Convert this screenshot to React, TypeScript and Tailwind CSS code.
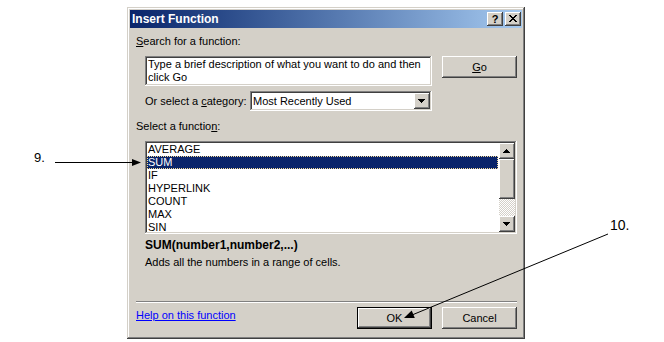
const raised =
  "shadow-[inset_-1px_-1px_#404040,inset_1px_1px_#fff,inset_-2px_-2px_#808080,inset_2px_2px_#d4d0c8]";
const sunken =
  "shadow-[inset_-1px_-1px_#fff,inset_1px_1px_#808080,inset_-2px_-2px_#d4d0c8,inset_2px_2px_#404040]";

const functions = ["AVERAGE", "SUM", "IF", "HYPERLINK", "COUNT", "MAX", "SIN"];

function ArrowUp() {
  return (
    <svg width="16" height="16" shapeRendering="crispEdges">
      <path d="M7 6h1v1H7zM6 7h3v1H6zM5 8h5v1H5zM4 9h7v1H4z" fill="#000" />
    </svg>
  );
}

function ArrowDown() {
  return (
    <svg width="16" height="16" shapeRendering="crispEdges">
      <path d="M4 6h7v1H4zM5 7h5v1H5zM6 8h3v1H6zM7 9h1v1H7z" fill="#000" />
    </svg>
  );
}

function TitleBar() {
  return (
    <div className="flex h-[18px] items-center justify-between bg-linear-to-r from-[#0a246a] to-[#a6caf0] pl-[2px] pr-[1px]">
      <span className="text-[12px] font-bold leading-[18px] text-white">Insert Function</span>
      <div className="flex gap-[2px]">
        <button
          type="button"
          className={`flex h-[14px] w-[16px] items-center justify-center bg-[#d4d0c8] text-[11px] font-bold leading-[14px] ${raised}`}
        >
          ?
        </button>
        <button
          type="button"
          className={`flex h-[14px] w-[16px] items-center justify-center bg-[#d4d0c8] ${raised}`}
        >
          <svg width="16" height="14" shapeRendering="crispEdges">
            <path
              d="M4 3h2v1H4zM10 3h2v1h-2zM5 4h2v1H5zM9 4h2v1H9zM6 5h4v1H6zM7 6h2v1H7zM6 7h4v1H6zM5 8h2v1H5zM9 8h2v1H9zM4 9h2v1H4zM10 9h2v1h-2z"
              fill="#000"
            />
          </svg>
        </button>
      </div>
    </div>
  );
}

function PushButton({ children, primary }: { children: React.ReactNode; primary?: boolean }) {
  return (
    <button
      type="button"
      className={`flex h-[22px] w-[75px] items-center justify-center bg-[#d4d0c8] text-[11px] leading-[13px] ${raised} ${
        primary ? "border border-black" : ""
      }`}
    >
      {children}
    </button>
  );
}

function FunctionList() {
  return (
    <div className={`ml-[15px] mt-[8px] flex h-[93px] w-[372px] bg-white p-[2px] ${sunken}`}>
      <ul className="flex-1 overflow-hidden">
        {functions.map((fn, i) => (
          <li
            key={fn}
            className={`h-[13px] w-[351px] border leading-[11px] ${
              i === 1
                ? "border-dotted border-[#f5db95] bg-[#0a246a] text-white"
                : "border-transparent"
            }`}
          >
            {fn}
          </li>
        ))}
      </ul>
      <div className="flex w-[16px] flex-col">
        <div className={`h-[16px] bg-[#d4d0c8] ${raised}`}>
          <ArrowUp />
        </div>
        <div className={`h-[40px] bg-[#d4d0c8] ${raised}`} />
        <div className="flex-1 bg-[repeating-conic-gradient(#d4d0c8_0_25%,#fff_0_50%)] bg-[length:2px_2px]" />
        <div className={`h-[16px] bg-[#d4d0c8] ${raised}`}>
          <ArrowDown />
        </div>
      </div>
    </div>
  );
}

function Dialog() {
  return (
    <div
      className={`flex h-[332px] w-[398px] flex-col bg-[#d4d0c8] p-[3px] shadow-[inset_-1px_-1px_#404040,inset_1px_1px_#d4d0c8,inset_-2px_-2px_#808080,inset_2px_2px_#fff]`}
    >
      <TitleBar />

      <p className="ml-[6px] mt-[7px] h-[13px]">
        <u>S</u>earch for a function:
      </p>

      <div className="ml-[15px] mt-[8px] flex gap-[10px]">
        <div className={`h-[30px] w-[287px] bg-white p-[2px] pl-[3px] ${sunken}`}>
          <p className="whitespace-nowrap">
            Type a brief description of what you want to do and then
            <br />
            click Go
          </p>
        </div>
        <PushButton>
          <span>
            <u>G</u>o
          </span>
        </PushButton>
      </div>

      <div className="ml-[15px] mt-[5px] flex h-[20px] items-center">
        <span className="w-[105px]">
          Or select a <u>c</u>ategory:
        </span>
        <div className={`flex h-[20px] w-[182px] items-center bg-white p-[2px] ${sunken}`}>
          <span className="flex-1 pl-[1px]">Most Recently Used</span>
          <div className={`h-[16px] w-[16px] bg-[#d4d0c8] ${raised}`}>
            <ArrowDown />
          </div>
        </div>
      </div>

      <p className="ml-[6px] mt-[9px] h-[13px]">
        Select a functio<u>n</u>:
      </p>

      <FunctionList />

      <p className="ml-[15px] mt-[5px] h-[13px] text-[12px] font-bold">SUM(number1,number2,...)</p>
      <p className="ml-[15px] mt-[4px] h-[13px]">Adds all the numbers in a range of cells.</p>

      <div className="ml-[6px] mt-[32px] h-[2px] w-[381px] border-t border-b border-t-[#808080] border-b-white" />

      <div className="ml-[6px] mt-[4px] flex w-[381px] items-start">
        <a href="#" className="flex-1 pt-[2px] text-[#0000ff] underline">
          Help on this function
        </a>
        <div className="flex gap-[10px]">
          <PushButton primary>OK</PushButton>
          <PushButton>Cancel</PushButton>
        </div>
      </div>
    </div>
  );
}

export default function App() {
  return (
    <div className="relative h-[342px] w-[664px] overflow-hidden bg-white pl-[127px] pt-[7px] font-['Liberation_Sans',Arial,sans-serif] text-[11px] leading-[13px] text-black">
      <Dialog />

      <span className="absolute left-[34px] top-[150px] text-[13px] leading-[15px]">9.</span>
      <span className="absolute left-[610px] top-[217px] text-[14px] leading-[16px]">10.</span>

      <svg className="pointer-events-none absolute inset-0" width="664" height="342">
        <line x1="55" y1="162.5" x2="134" y2="162.5" stroke="#000" strokeWidth="1" />
        <polygon points="132,159 141,162.5 132,166" fill="#000" />
        <line x1="608" y1="234" x2="412" y2="315" stroke="#000" strokeWidth="1" />
        <polygon points="404,318 414.8,317.9 411.7,310.5" fill="#000" />
      </svg>
    </div>
  );
}
